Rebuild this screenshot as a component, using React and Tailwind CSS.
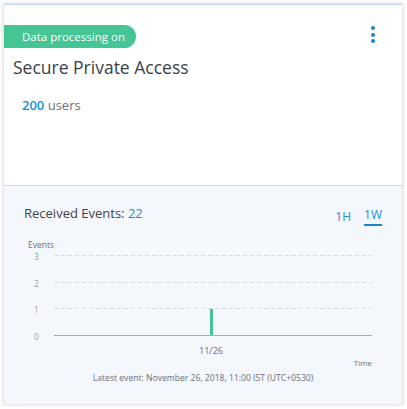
export default function App() {
  return (
    <div className="w-[407px] h-[409px] bg-white p-[4px]" style={{ fontFamily: '"Open Sans", "Noto Sans", sans-serif' }}>
      <div className="w-[398px] h-[400px] flex flex-col border-t border-t-[#c3d9ec] shadow-[0_0_3px_1px_rgba(0,0,0,0.15)] bg-white overflow-hidden">
        <div className="h-[181px] shrink-0 relative border-b border-[#c3d9ec]">
          <div className="mt-[20px] flex items-center justify-between pr-[27px]">
            <div className="h-[23px] w-[132px] bg-[#45c494] rounded-r-full flex items-center pl-[18px] text-white text-[11.5px]">
              Data processing on
            </div>
            <div className="flex flex-col gap-[2.5px] -mt-[4px]">
              <span className="block w-[4px] h-[4px] rounded-full bg-[#1488d0]" />
              <span className="block w-[4px] h-[4px] rounded-full bg-[#1488d0]" />
              <span className="block w-[4px] h-[4px] rounded-full bg-[#1488d0]" />
            </div>
          </div>
          <div className="pl-[9px] mt-[8px] text-[17.5px] text-[#3b3f47] leading-[22px]">Secure Private Access</div>
          <div className="pl-[18px] mt-[18px] text-[13px] leading-[18px]">
            <span className="text-[#1a90da] font-semibold">200</span>
            <span className="text-[#6b7078]"> users</span>
          </div>
        </div>
        <div className="flex-1 bg-[#f4f7fc] relative">
          <div className="flex items-center justify-between pl-[20px] pr-[20px] mt-[16px]">
            <div className="text-[13px] text-[#3e434c]">
              Received Events: <span className="text-[#1a90da]">22</span>
            </div>
            <div className="flex gap-[13px] text-[12px] text-[#1a90da] mt-[6px]">
              <span>1H</span>
              <span className="border-b-2 border-[#1a85c8] leading-[14px]">1W</span>
            </div>
          </div>
          <svg width="398" height="170" className="block" style={{ fontFamily: '"Open Sans", sans-serif' }}>
            <text x="24" y="22" fontSize="8.5" fill="#6b7078">Events</text>
            <text x="30" y="34" fontSize="8.5" fill="#9ca0a8">3</text>
            <text x="30" y="61" fontSize="8.5" fill="#9ca0a8">2</text>
            <text x="30" y="87" fontSize="8.5" fill="#9ca0a8">1</text>
            <text x="30" y="114" fontSize="8.5" fill="#9ca0a8">0</text>
            <line x1="50" x2="368" y1="29.5" y2="29.5" stroke="#d7d9dd" strokeDasharray="4 3" />
            <line x1="50" x2="368" y1="56.5" y2="56.5" stroke="#d7d9dd" strokeDasharray="4 3" />
            <line x1="50" x2="368" y1="82.5" y2="82.5" stroke="#d7d9dd" strokeDasharray="4 3" />
            <rect x="206" y="83" width="3" height="26" fill="#45c494" />
            <line x1="50" x2="368" y1="109.5" y2="109.5" stroke="#a5a9b8" />
            <text x="207" y="128" fontSize="9" fill="#6b7078" textAnchor="middle">11/26</text>
            <text x="368" y="140" fontSize="8" fill="#6b7078" textAnchor="end">Time</text>
            <text x="199" y="155" fontSize="8.6" fill="#6b7078" textAnchor="middle">Latest event: November 26, 2018, 11:00 IST (UTC+0530)</text>
          </svg>
        </div>
      </div>
    </div>
  );
}
